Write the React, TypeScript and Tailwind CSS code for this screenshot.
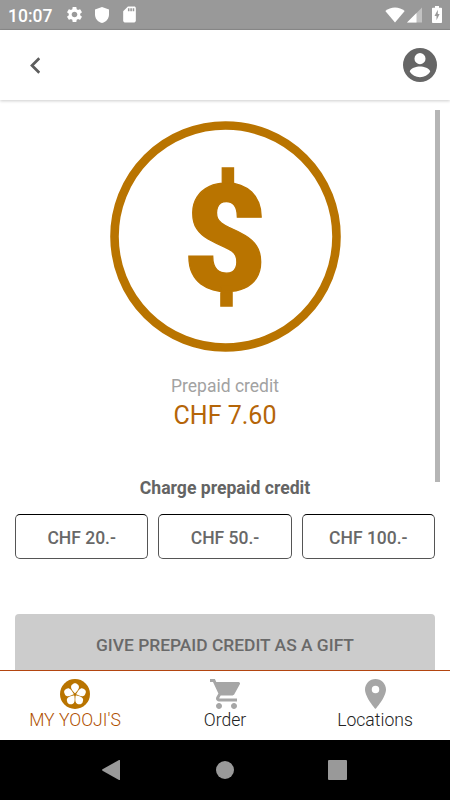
import type { ReactNode } from "react";
import { MdSdCard, MdSettings } from "react-icons/md";

const AMOUNTS = ["CHF 20.-", "CHF 50.-", "CHF 100.-"];

const PETALS = [0, 72, 144, 216, 288];

function StatusBar() {
  return (
    <div className="flex h-[30px] items-center border-b border-[#8b8b8b] bg-[#999] pl-2 text-white">
      <span className="w-[57px] pt-[4px] text-[17.5px] font-medium leading-none">10:07</span>
      <MdSettings className="size-[19px]" />
      <svg className="ml-[11px] h-4 w-[14px]" viewBox="0 0 14 16" fill="currentColor">
        <path d="M7 0l7 2.400v5C14 11.400 11.300 14.800 7 16 2.700 14.800 0 11.400 0 7.400v-5z" />
      </svg>
      <MdSdCard className="ml-[11px] size-[19px]" />
      <svg className="ml-auto h-4 w-5" viewBox="0 0 20 16" fill="currentColor">
        <path d="M10 15.500L.3 4C5.500-.8 14.500-.8 19.700 4z" />
      </svg>
      <svg className="ml-[2px] size-4" viewBox="0 0 16 16" fill="currentColor">
        <path d="M0 15.500L15 .5v15z" opacity=".4" />
        <path d="M0 15.500L9.500 6v9.500z" />
      </svg>
      <svg className="ml-[9px] mr-2 h-[17px] w-[10px]" viewBox="0 0 10 17">
        <path d="M3 0h4v1.800h2.200c.5 0 .8.300.8.800v13.600c0 .5-.3.800-.8.800H.8c-.5 0-.8-.3-.8-.8V2.600c0-.5.3-.8.800-.8H3z" fill="#fff" />
        <path d="M5.800 3.800L2.500 10h2v4.200L7.600 8h-1.800z" fill="#999" />
      </svg>
    </div>
  );
}

function Header() {
  return (
    <header className="relative z-10 flex h-[70px] items-center justify-between bg-white pl-[30px] pr-[13px] shadow-[0_1px_3px_rgba(0,0,0,0.2)]">
      <svg className="h-[17px] w-[10px]" viewBox="0 0 10 17" fill="none" stroke="#5d5d5d" strokeWidth="2.700">
        <path d="M9.300 1.200L2 8.500l7.300 7.300" />
      </svg>
      <svg className="size-[34px]" viewBox="2 2 20 20" fill="#666">
        <path d="M12 2a10 10 0 100 20 10 10 0 000-20zm0 3a3.200 3.200 0 110 6.500A3.200 3.200 0 0112 5zm0 14.200c-2.500 0-4.710-1.280-6-3.220.03-1.990 4-3.080 6-3.080s5.970 1.090 6 3.080c-1.290 1.940-3.500 3.220-6 3.220z" />
      </svg>
    </header>
  );
}

function CreditBadge() {
  return (
    <svg className="size-[232px] shrink-0" viewBox="0 0 232 232">
      <circle cx="116.500" cy="115.500" r="111" fill="none" stroke="#b97400" strokeWidth="8.600" />
      <text
        x="74"
        y="168.500"
        fill="#b97400"
        stroke="#b97400"
        strokeWidth="1.300"
        fontSize="149"
        fontWeight="900"
        textLength="84"
        lengthAdjust="spacingAndGlyphs"
      >
        $
      </text>
    </svg>
  );
}

function FlowerIcon() {
  return (
    <svg className="size-[30px]" viewBox="0 0 30 30">
      <circle cx="15" cy="15" r="15" fill="#b97400" />
      {PETALS.map((angle) => (
        <path
          key={angle}
          transform={`rotate(${angle} 15 15.500)`}
          d="M15 14.500C13.500 12.500 11 10.500 11 8c0-1.800 1.500-2.500 2.600-3.400.5-.5 2.300-.5 2.800 0C17.500 5.500 19 6.200 19 8c0 2.500-2.500 4.500-4 6.500z"
          fill="#fff"
        />
      ))}
      <circle cx="15" cy="15.500" r="1.300" fill="#b97400" />
    </svg>
  );
}

function CartIcon() {
  return (
    <svg className="size-[30px]" viewBox="1 2 20 20" fill="currentColor">
      <path d="M7 18c-1.100 0-1.990.9-1.990 2S5.900 22 7 22s2-.9 2-2-.9-2-2-2zM1 2v2h2l3.600 7.590-1.350 2.450c-.16.280-.25.610-.25.960 0 1.100.9 2 2 2h12v-2H7.420c-.14 0-.25-.11-.25-.25l.03-.12.900-1.630h7.450c.75 0 1.410-.41 1.750-1.030l3.580-6.490A1 1 0 0020 4H5.210l-.94-2H1zm16 16c-1.100 0-1.990.9-1.990 2s.89 2 1.990 2 2-.9 2-2-.9-2-2-2z" />
    </svg>
  );
}

function PinIcon() {
  return (
    <svg className="h-[30px] w-[21px]" viewBox="5 2 14 20" fill="currentColor">
      <path d="M12 2C8.130 2 5 5.130 5 9c0 5.250 7 13 7 13s7-7.750 7-13c0-3.870-3.130-7-7-7zm0 9.500a2.500 2.500 0 010-5 2.500 2.500 0 010 5z" />
    </svg>
  );
}

function Tab({ icon, label, active }: { icon: ReactNode; label: string; active?: boolean }) {
  return (
    <div className={`flex flex-1 flex-col items-center pt-2 ${active ? "text-[#b05000]" : "text-[#222]"}`}>
      <div className="flex h-[30px] items-center justify-center text-[#a6a6a6]">{icon}</div>
      <span className="text-[17.6px] font-light leading-[23px]">{label}</span>
    </div>
  );
}

export default function App() {
  return (
    <div className="flex h-[800px] w-[450px] flex-col overflow-hidden bg-white font-['Roboto',sans-serif]">
      <StatusBar />
      <Header />

      <main className="relative flex min-h-0 flex-1 flex-col items-center overflow-hidden px-[15px] pt-[21px]">
        <div className="absolute right-[10px] top-[10px] h-[372px] w-[5px] bg-[#b5b5b5]" />
        <CreditBadge />
        <p className="mt-[21px] text-[17.5px] leading-6 text-[#a2a2a2]">Prepaid credit</p>
        <p className="mt-[2px] text-[25px] leading-8 text-[#b56508]">CHF 7.60</p>
        <h2 className="mt-[44px] text-[17.6px] font-bold leading-6 text-[#646464]">Charge prepaid credit</h2>
        <div className="mt-[14px] grid w-full shrink-0 grid-cols-3 gap-[10px]">
          {AMOUNTS.map((amount) => (
            <button
              key={amount}
              className="h-[45px] rounded-[5px] border border-[#555] border-t-black pt-[4px] text-[17.5px] font-medium text-[#686868]"
            >
              {amount}
            </button>
          ))}
        </div>
        <button className="mt-[55px] h-[62px] w-full shrink-0 rounded-[4px] bg-[#ccc] text-[17.4px] font-medium text-[#696969]">
          GIVE PREPAID CREDIT AS A GIFT
        </button>
      </main>

      <nav className="flex h-[70px] shrink-0 border-t border-[#b34510] bg-white">
        <Tab icon={<FlowerIcon />} label="MY YOOJI'S" active />
        <Tab icon={<CartIcon />} label="Order" />
        <Tab icon={<PinIcon />} label="Locations" />
      </nav>

      <div className="flex h-[60px] shrink-0 items-center bg-black pl-[102px]">
        <svg className="h-5 w-[18px]" viewBox="0 0 18 20" fill="#999">
          <path d="M.5 9.300L17 0q1-.3 1 .6v18.800q0 .9-1 .5L.5 10.700q-.9-.7 0-1.400z" />
        </svg>
        <div className="ml-24 size-[18px] rounded-full bg-[#999]" />
        <div className="ml-[94px] h-5 w-[19px] rounded-[1px] bg-[#999]" />
      </div>
    </div>
  );
}
